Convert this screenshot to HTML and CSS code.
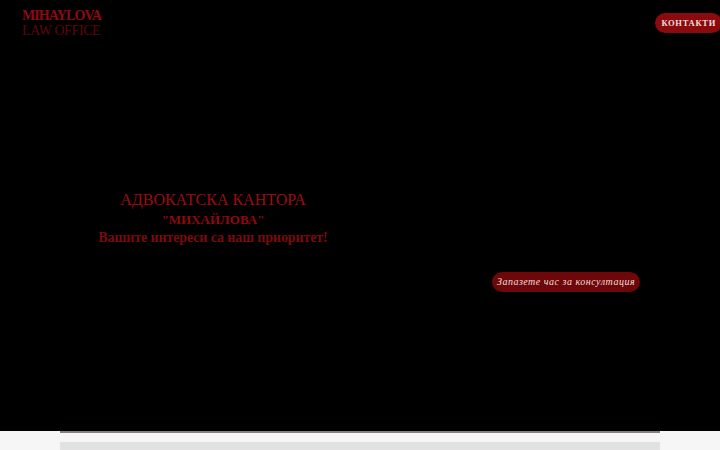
FILE: index.html
```html
<!DOCTYPE html>
<html lang="bg">
<head>
  <meta charset="UTF-8">
  <title>Адвокатска кантора Михайлова</title>
  <link rel="stylesheet" href="styles.css">
</head>
<body>

<section class="hero">
  <header class="topbar">
    <a class="logo" href="#">
      <span class="logo-main">MIHAYLOVA</span>
      <span class="logo-sub">LAW OFFICE</span>
    </a>
    <a class="contacts-btn" href="#contacts">КОНТАКТИ</a>
  </header>

  <div class="hero-body">
    <div class="hero-text">
      <h1>АДВОКАТСКА КАНТОРА</h1>
      <h2>"МИХАЙЛОВА"</h2>
      <p>Вашите интереси са наш приоритет!</p>
    </div>
    <div class="hero-action">
      <a class="book-btn" href="#book">Запазете час за консултация</a>
    </div>
  </div>
</section>

<section class="content">
  <div class="content-inner">
    <div class="content-box"></div>
  </div>
</section>

</body>
</html>
```

FILE: styles.css
```css
body { margin: 0; font-family: "Liberation Serif", "DejaVu Serif", serif; background-color: #f6f6f6; }
a { text-decoration: none; }

.hero {
  background-color: #000;
  height: 431px;
  overflow: hidden;
}
.topbar {
  display: flex;
  justify-content: space-between;
  align-items: flex-start;
  padding: 8px 0 0 22px;
}
.logo { display: flex; flex-direction: column; line-height: 15px; }
.logo-main { color: #8e0a12; font-size: 14px; font-weight: bold; letter-spacing: -0.9px; }
.logo-sub { color: #5c070b; font-size: 14px; letter-spacing: -0.4px; }
.contacts-btn {
  margin-top: 5px;
  margin-right: -2px;
  background-color: #8a0a0e;
  color: #f3dede;
  font-size: 8.5px;
  font-weight: bold;
  letter-spacing: 0.7px;
  padding: 5px 6px 5px 6px;
  border-radius: 10px;
  line-height: 10px;
}

.hero-body {
  display: grid;
  grid-template-columns: 426px 1fr;
  padding-right: 14px;
  margin-top: 151px;
}
.hero-text { text-align: center; }
.hero-text h1 {
  margin: 0;
  color: #9c0c10;
  font-size: 16px;
  font-weight: normal;
  line-height: 22px;
}
.hero-text h2 {
  margin: 0;
  color: #8c0a0e;
  font-size: 13px;
  line-height: 18px;
  font-weight: bold;
}
.hero-text p {
  margin: 0;
  color: #7a0a0c;
  font-size: 14px;
  font-weight: bold;
  letter-spacing: -0.1px;
  line-height: 18px;
}
.hero-action { text-align: center; padding-top: 82px; }
.book-btn {
  display: inline-block;
  background-color: #6e0709;
  color: #f1dcdc;
  font-size: 10px;
  font-style: italic;
  letter-spacing: 0.5px;
  padding: 5px 5px;
  border-radius: 10px;
  line-height: 10px;
}

.content { padding: 0 60px; }
.content-inner { border-top: 2px solid #8a7f7f; padding-top: 9px; }
.content-box { background-color: #e2e2e2; height: 40px; }
```
